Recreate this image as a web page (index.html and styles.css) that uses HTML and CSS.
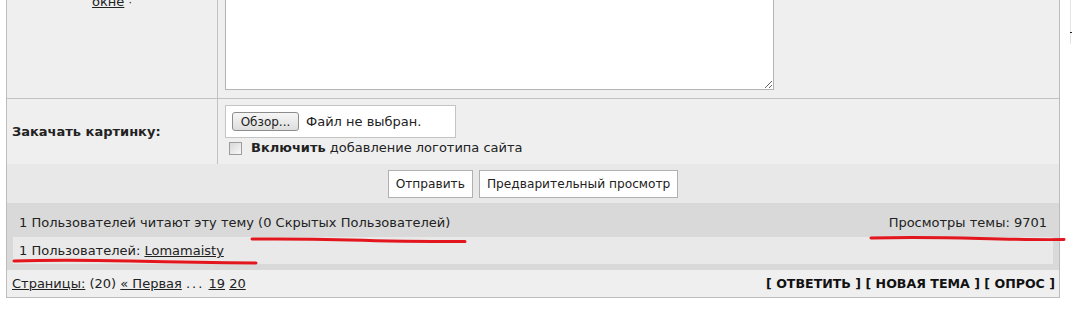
FILE: index.html
```html
<!DOCTYPE html>
<html lang="ru">
<head>
<meta charset="utf-8">
<title>Ответ в тему</title>
<link rel="stylesheet" href="styles.css">
</head>
<body>
<div class="page">
  <div class="form">
    <div class="row row-msg">
      <div class="cell-label smile-links"><a href="#">окне</a> <span class="dot">·</span></div>
      <div class="cell-field field-msg"><textarea class="msg"></textarea></div>
    </div>
    <div class="row row-upload">
      <div class="cell-label label-upload">Закачать картинку:</div>
      <div class="cell-field field-upload">
        <div class="file-box"><span class="browse">Обзор...</span><span class="file-name">Файл не выбран.</span></div>
        <div class="check"><span class="cb"></span><b>Включить</b>&nbsp;добавление логотипа сайта</div>
      </div>
    </div>
    <div class="row-buttons">
      <button class="btn">Отправить</button>
      <button class="btn">Предварительный просмотр</button>
    </div>
    <div class="stats">
      <div class="stats-head">
        <span>1 Пользователей читают эту тему (0 Скрытых Пользователей)</span>
        <span>Просмотры темы: 9701</span>
      </div>
      <div class="stats-list">1 Пользователей: <a href="#">Lomamaisty</a></div>
    </div>
    <div class="pager-row">
      <div class="pager"><a href="#">Страницы:</a> (20) <a href="#">« Первая</a> <span class="dots">...</span> <a href="#">19</a> <a href="#">20</a></div>
      <div class="actions">[ ОТВЕТИТЬ ] [ НОВАЯ ТЕМА ] [ ОПРОС ]</div>
    </div>
  </div>
  <div class="edge-mark"></div>
  <svg class="marks" width="1072" height="320" viewBox="0 0 1072 320">
    <path d="M252 239 Q 300 238.5 350 240 T 465 241.5"/>
    <path d="M14 261 Q 60 259.5 130 261 T 256 263"/>
    <path d="M871 238 Q 920 237 980 238.5 T 1064 239.5"/>
  </svg>
</div>
</body>
</html>
```

FILE: styles.css
```css
* { box-sizing: border-box; }

body {
  margin: 0;
  background: #fff;
  font-family: "DejaVu Sans", Verdana, sans-serif;
  font-size: 13px;
  color: #222;
}

a { color: #222; text-decoration: underline; }

.page {
  position: relative;
  width: 1072px;
  height: 320px;
  overflow: hidden;
}

.form {
  margin: -12px 0 0 6px;
  width: 1054px;
  border: 1px solid #bcbcbc;
  border-top: none;
}

.row {
  display: grid;
  grid-template-columns: 211px 1fr;
  background: #efefef;
}

.row-msg { border-bottom: 1px solid #c2c2c2; }

.cell-label { border-right: 1px solid #c2c2c2; }

.smile-links {
  padding-top: 6px;
  line-height: 16px;
  text-align: center;
}

.dot { font-size: 11px; }

.field-msg { padding: 6px 0 8px 7px; }

.msg {
  display: block;
  width: 549px;
  height: 96px;
  margin: 0;
  border: 1px solid #b4b4b4;
  background: #fff;
  resize: both;
}

.row-upload { height: 65px; }

.label-upload {
  display: flex;
  align-items: center;
  padding-left: 5px;
  font-weight: bold;
}

.field-upload { padding: 6px 0 0 7px; }

.file-box {
  display: flex;
  align-items: center;
  width: 231px;
  height: 33px;
  padding-left: 6px;
  background: #fff;
  border: 1px solid #c4c4c4;
}

.browse {
  display: flex;
  align-items: center;
  justify-content: center;
  width: 67px;
  height: 19px;
  border: 1px solid #8c8c8c;
  border-radius: 3px;
  background: linear-gradient(#f6f6f6, #dedede);
  font-size: 12px;
  color: #222;
}

.file-name { margin-left: 7px; }

.check {
  display: flex;
  align-items: center;
  margin-top: 2px;
  padding-left: 4px;
  line-height: 16px;
}

.cb {
  width: 13px;
  height: 13px;
  margin-right: 9px;
  border: 1px solid #9c9c9c;
  background: linear-gradient(135deg, #d8d8d8, #f8f8f8);
}

.row-buttons {
  display: flex;
  justify-content: center;
  gap: 6px;
  padding: 6px 0 5px;
  background: #e8e8e8;
}

.btn {
  height: 28px;
  padding: 0 7px;
  border: 1px solid #b0b0b0;
  background: #fff;
  font-family: "DejaVu Sans", Verdana, sans-serif;
  font-size: 12.2px;
  color: #222;
}

.stats {
  padding: 12px 6px 6px;
  background: #d9d9d9;
}

.stats-head {
  display: flex;
  justify-content: space-between;
  padding: 0 6px;
  margin-bottom: 6px;
  line-height: 16px;
}

.stats-list {
  padding: 0 6px;
  line-height: 27px;
  background: #e9e9e9;
}

.pager-row {
  display: flex;
  justify-content: space-between;
  padding: 0 4px 0 5px;
  line-height: 27px;
  background: #efefef;
}

.dots { letter-spacing: 2px; }

.actions {
  font-weight: bold;
  font-size: 12.6px;
  color: #111;
}

.edge-mark {
  position: absolute;
  left: 1070px;
  top: 0;
  width: 1px;
  height: 44px;
  background: #e4e4e4;
}

.edge-mark::after {
  content: "";
  position: absolute;
  left: 0;
  top: 32px;
  width: 2px;
  height: 1px;
  background: #222;
}

.marks {
  position: absolute;
  left: 0;
  top: 0;
  pointer-events: none;
  fill: none;
  stroke: #e3151d;
  stroke-width: 3;
  stroke-linecap: round;
}
```
